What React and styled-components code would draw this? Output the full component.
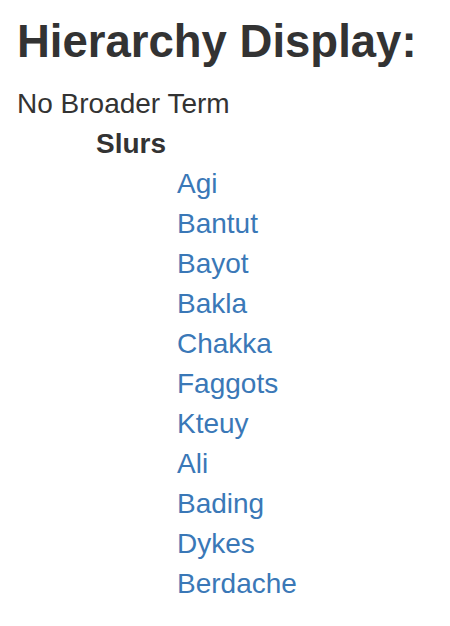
import styled, { createGlobalStyle } from "styled-components";

const GlobalStyle = createGlobalStyle`
  body {
    margin: 0;
    background: #fff;
    font-family: "Liberation Sans", Arial, Helvetica, sans-serif;
    color: #333;
  }
`;

const Page = styled.div`
  padding: 17px 17px 0 17px;
`;

const Title = styled.h2`
  margin: 0 0 17px 0;
  font-size: 45.5px;
  line-height: 1.1;
  font-weight: bold;
  color: #333;
`;

const Tree = styled.ul`
  list-style: none;
  margin: 0;
  padding: 0 0 0 ${(p) => p.$indent || 0}px;
  font-size: 28px;
  line-height: 40px;
`;

const Node = styled.li`
  font-weight: ${(p) => (p.$bold ? "bold" : "normal")};
`;

const TermLink = styled.a`
  color: #3a78b7;
  text-decoration: none;
  font-weight: normal;
`;

const narrower = [
  "Agi",
  "Bantut",
  "Bayot",
  "Bakla",
  "Chakka",
  "Faggots",
  "Kteuy",
  "Ali",
  "Bading",
  "Dykes",
  "Berdache",
];

export default function App() {
  return (
    <Page>
      <GlobalStyle />
      <Title>Hierarchy Display:</Title>
      <Tree>
        <Node>
          No Broader Term
          <Tree $indent={79}>
            <Node $bold>
              Slurs
              <Tree $indent={81}>
                {narrower.map((term) => (
                  <Node key={term}>
                    <TermLink href="#">{term}</TermLink>
                  </Node>
                ))}
              </Tree>
            </Node>
          </Tree>
        </Node>
      </Tree>
    </Page>
  );
}
